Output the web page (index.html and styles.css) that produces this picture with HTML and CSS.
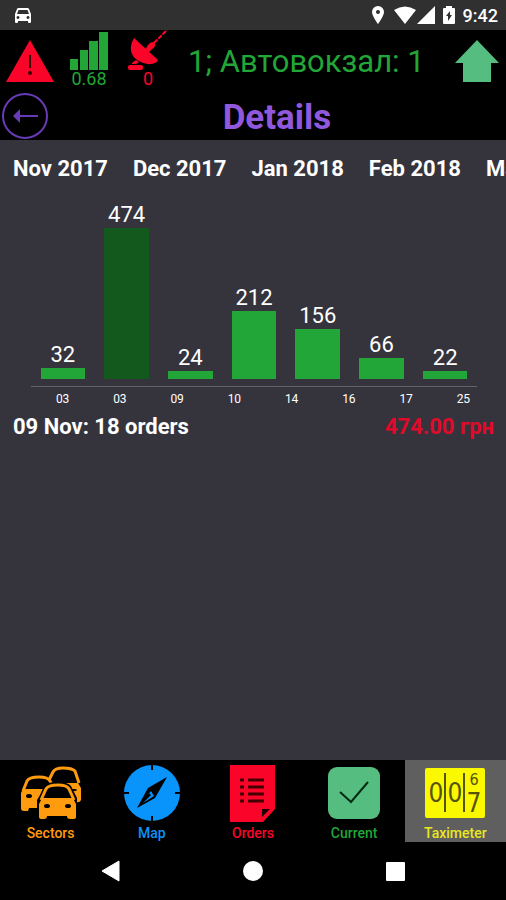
FILE: index.html
```html
<!DOCTYPE html>
<html lang="en">
    <head>
        <meta charset="utf-8">
        <meta name="viewport" content="width=device-width, initial-scale=1">
        <title>Details</title>
        <link rel="stylesheet" href="styles.css">
    </head>
    <body>
        <div class="status-bar">
            <svg width="18" height="18" viewBox="0 0 18 18" fill="#fff">
                <path fill-rule="evenodd" d="M3 3Q3.300 2 4.500 2h9Q14.700 2 15 3l2 5v8q0 1-1 1h-1q-1 0-1-1v-1H4v1q0 1-1 1H2q-1 0-1-1V8zM4.500 4 3 8h12L13.500 4zM4 10a1.500 1.500 0 1 0 .01 0zM14 10a1.500 1.500 0 1 0 .01 0z"/>
            </svg>
            <div class="status-right">
                <svg width="14" height="20" viewBox="0 0 14 20" fill="#fff">
                    <path fill-rule="evenodd" d="M7 1a6 6 0 0 1 6 6c0 4-6 12-6 12S1 11 1 7a6 6 0 0 1 6-6zm0 4a2 2 0 1 0 .01 0z"/>
                </svg>
                <svg class="wifi" width="24" height="20" viewBox="0 0 24 20" fill="#fff"><path d="M1 5Q12-2 23 5L12 19z"/></svg>
                <svg width="18" height="20" viewBox="0 0 18 20" fill="#fff"><path d="M18 1v18H0z"/></svg>
                <svg class="battery" width="12" height="20" viewBox="0 0 12 20">
                    <path fill="#fff" d="M3 3V1h6v2h2q1 0 1 1v14q0 1-1 1H1q-1 0-1-1V4q0-1 1-1z"/>
                    <path fill="#303030" d="M7 6 3 11h2v5l4-6H7z"/>
                </svg>
                <span class="time">9:42</span>
            </div>
        </div>

        <header class="top-bar">
            <svg class="alert" width="48" height="42" viewBox="0 0 48 42">
                <path fill="#fb0429" d="M24 0 48 42H0z"/>
                <path stroke="#300" stroke-width="2" d="M24 15v13"/>
                <circle cx="24" cy="33" r="2" fill="#300"/>
            </svg>
            <div class="indicator signal">
                <svg width="38" height="38" viewBox="0 0 38 38" fill="#22a637">
                    <path d="M0 27h8v11H0zM10 18h8v20h-8zM19 9h9v29h-9zM29 0h9v38h-9z"/>
                </svg>
                <span>0.68</span>
            </div>
            <div class="indicator gps">
                <svg width="40" height="40" viewBox="0 0 40 40" fill="#fb0429">
                    <path d="M6 8C0 18 3 27 11 31Q20 37 29 32L30 30z"/>
                    <path d="M17 20l3-5q4-5 7-2 1 4-3 6l-4 4z"/>
                    <rect y="35" width="15" height="5" rx="2"/>
                    <path d="M4 33l4-3 3 2-3 2H4z"/>
                    <path stroke="#fb0429" stroke-width="2" stroke-dasharray="5 1" d="M26 13 39 0"/>
                </svg>
                <span>0</span>
            </div>
            <div class="sector">1; Автовокзал: 1</div>
            <svg width="44" height="42" viewBox="0 0 44 42" fill="#55bd80"><path d="M22 0 44 23H36V42H8V23H0z"/></svg>
        </header>

        <div class="title-bar">
            <button class="back" type="button" aria-label="Back">
                <svg width="48" height="48" viewBox="0 0 48 48">
                    <circle cx="24" cy="24" r="22" fill="none" stroke="#673ab7" stroke-width="2"/>
                    <path d="M37 24H18" stroke="#673ab7" stroke-width="2"/>
                    <path fill="#673ab7" d="M12 24 19 17v14z"/>
                </svg>
            </button>
            <h1>Details</h1>
        </div>

        <main>
            <nav class="months">
                <a href="#nov">Nov 2017</a>
                <a href="#dec">Dec 2017</a>
                <a href="#jan">Jan 2018</a>
                <a href="#feb">Feb 2018</a>
                <a href="#mar">Mar 2018</a>
            </nav>

            <div class="chart">
                <div class="bars">
                    <div class="col"><span>32</span><div class="bar" style="height:7%"></div></div>
                    <div class="col"><span>474</span><div class="bar selected" style="height:100%"></div></div>
                    <div class="col"><span>24</span><div class="bar" style="height:5%"></div></div>
                    <div class="col"><span>212</span><div class="bar" style="height:45%"></div></div>
                    <div class="col"><span>156</span><div class="bar" style="height:33%"></div></div>
                    <div class="col"><span>66</span><div class="bar" style="height:14%"></div></div>
                    <div class="col"><span>22</span><div class="bar" style="height:5%"></div></div>
                </div>
                <div class="ticks">
                    <span>03</span>
                    <span>03</span>
                    <span>09</span>
                    <span>10</span>
                    <span>14</span>
                    <span>16</span>
                    <span>17</span>
                    <span>25</span>
                </div>
            </div>

            <div class="summary">
                <span>09 Nov: 18 orders</span>
                <span class="total">474.00 грн</span>
            </div>
        </main>

        <nav class="tabs">
            <a class="sectors" href="#sectors">
                <svg width="62" height="58" viewBox="0 0 62 58">
                    <path fill="none" stroke="#ff9b0f" stroke-width="3" d="M29 16 33 8Q35 4 43 4q9 0 12 3l4 12"/>
                    <path fill="#ff9b0f" d="M35 19h23l3 5v12q-1 3-5 2l-5-1-4-12-4-3-8-1z"/>
                    <ellipse cx="54" cy="26" rx="3" ry="1"/>
                    <path fill="none" stroke="#ff9b0f" stroke-width="3" d="M3 27 7 17q2-4 12-4 9 0 11 4l2 3"/>
                    <path fill="#ff9b0f" d="M3 25h22l-3 5-2 14H9l-1 3H4q-3 0-3-3V29z"/>
                    <ellipse cx="9" cy="32" rx="3" ry="2"/>
                    <path d="M17 46V36l3-5 4-9q3-4 13-4 11 0 14 4l6 12v10z"/>
                    <path fill="none" stroke="#ff9b0f" stroke-width="3" d="M21 36 26 25q2-4 12-4 9 0 11 4l5 11"/>
                    <path fill="#ff9b0f" d="M22 34h31l3 6v13q0 2-3 2h-3q-3 0-3-3H27q0 3-3 3h-3q-2 0-2-2V40z"/>
                    <ellipse cx="27" cy="42" rx="3" ry="2"/>
                    <ellipse cx="48" cy="42" rx="3" ry="2"/>
                </svg>
                <span>Sectors</span>
            </a>
            <a class="map" href="#map">
                <svg width="58" height="58" viewBox="0 0 58 58">
                    <circle cx="29" cy="29" r="28" fill="#0894fb"/>
                    <path stroke="#000" stroke-width="2" d="M29 0v6M29 52v6M0 29h6M52 29h6"/>
                    <path d="M44 13 32 34 14 44 25 24z"/>
                    <path fill="#0894fb" d="M28 27l3 5-11 7 4-4 4-4-2-2-5 6z"/>
                </svg>
                <span>Map</span>
            </a>
            <a class="orders" href="#orders">
                <svg width="45" height="58" viewBox="0 0 45 58">
                    <path fill="#fb0429" d="M0 1h45v44L33 58H0z"/>
                    <path stroke="#400" stroke-width="3" d="M18 16h16M18 23h16M18 30h16M18 37h16M10 16h4M10 23h4M10 30h4M10 37h4"/>
                    <path fill="#200" d="M32 45h8l-8 8z"/>
                </svg>
                <span>Orders</span>
            </a>
            <a class="current" href="#current">
                <svg width="52" height="58" viewBox="0 0 52 58">
                    <rect y="3" width="52" height="52" rx="9" fill="#55bd80"/>
                    <path fill="none" stroke="#042a12" stroke-width="2" d="M12 28 23 38 40 18"/>
                </svg>
                <span>Current</span>
            </a>
            <a class="taximeter" href="#taximeter">
                <svg class="meter" width="60" height="58" viewBox="0 0 60 58">
                    <rect y="4" width="60" height="50" rx="2" fill="#fbf900"/>
                    <path stroke="#55540b" stroke-width="2" d="M20 9v39M39 9v39"/>
                    <g fill="#55540b" text-anchor="middle">
                        <text x="11" y="38">0</text>
                        <text x="30" y="38">0</text>
                        <text class="rolling" x="49" y="21">6</text>
                        <text x="49" y="48">7</text>
                    </g>
                </svg>
                <span>Taximeter</span>
            </a>
        </nav>

        <div class="system-nav">
            <button type="button" aria-label="Back"><svg width="20" height="22" viewBox="0 0 20 22" fill="#fff"><path d="M18 1v20L1 11z" stroke="#fff" stroke-linejoin="round"/></svg></button>
            <button type="button" aria-label="Home"><svg width="22" height="22" viewBox="0 0 22 22" fill="#fff"><circle cx="11" cy="11" r="10"/></svg></button>
            <button type="button" aria-label="Recent"><svg width="22" height="22" viewBox="0 0 22 22" fill="#fff"><rect x="2" y="2" width="19" height="19" rx="1"/></svg></button>
        </div>
    </body>
</html>
```
FILE: styles.css
```css
*{
    box-sizing: border-box;
}

body{
    margin: 0;
    min-height: 100vh;
    display: flex;
    flex-direction: column;
    background-color: #000;
    color: #fff;
    font-family: Roboto, "Liberation Sans", sans-serif;
    overflow-x: hidden;
}

svg{
    display: block;
    flex: none;
}

a{
    color: inherit;
    text-decoration: none;
}

button{
    padding: 0;
    border: none;
    background: none;
    cursor: pointer;
}

/* status bar */
.status-bar{
    height: 30px;
    padding: 0 8px 0 14px;
    display: flex;
    align-items: center;
    justify-content: space-between;
    background-color: #303030;
}

.status-right{
    display: flex;
    align-items: center;
}

.wifi{
    margin-left: 8px;
}

.battery{
    margin: 0 8px;
}

.time{
    font-size: 18px;
    font-weight: 500;
}

/* header */
.top-bar{
    height: 62px;
    padding: 0 7px 0 6px;
    display: flex;
    align-items: center;
}

.indicator{
    align-self: stretch;
    display: flex;
    flex-direction: column;
    align-items: center;
    font-size: 18px;
    line-height: 18px;
}

.signal{
    width: 38px;
    margin-left: 16px;
    padding-top: 2px;
    color: #22a637;
}

.gps{
    margin-left: 20px;
    color: #fb0429;
}

.sector{
    flex: 1;
    padding-left: 20px;
    color: #22a637;
    font-size: 31px;
    white-space: nowrap;
}

.title-bar{
    height: 48px;
    padding: 0 1px;
    display: grid;
    grid-template-columns: 48px 1fr;
    align-items: center;
}

.title-bar h1{
    margin: 0;
    padding-top: 2px;
    color: #9058dc;
    font-size: 35px;
    font-weight: 700;
    text-align: center;
}

/* content */
main{
    flex: 1;
    background-color: #35343d;
}

.months{
    padding: 16px 0 0 13px;
    display: flex;
    gap: 25px;
    overflow: hidden;
    font-size: 22px;
    font-weight: 700;
    line-height: 26px;
    white-space: nowrap;
}

.bars{
    height: 205px;
    margin: 0 29px 0 31px;
    padding: 46px 0 7px;
    display: flex;
    border-bottom: 1px solid #62616a;
}

.col{
    flex: 1;
    display: flex;
    flex-direction: column;
    justify-content: flex-end;
    align-items: center;
    font-size: 22px;
    line-height: 26px;
}

.bar{
    width: 70%;
    flex: none;
    background-color: #22a637;
}

.selected{
    background-color: #13591d;
}

.ticks{
    margin: 0 14px 0 34px;
    padding-top: 4px;
    display: flex;
    font-size: 12px;
    line-height: 16px;
}

.ticks span{
    flex: 1;
    text-align: center;
}

.summary{
    padding: 7px 12px 0 13px;
    display: flex;
    justify-content: space-between;
    font-size: 22px;
    font-weight: 700;
    line-height: 26px;
}

.total{
    color: #e00a2b;
}

/* bottom tabs */
.tabs{
    height: 82px;
    display: grid;
    grid-template-columns: repeat(5, 1fr);
}

.tabs a{
    padding-top: 4px;
    display: flex;
    flex-direction: column;
    align-items: center;
    gap: 2px;
    font-size: 14px;
    font-weight: 500;
    line-height: 18px;
}

.sectors{
    color: #ff9b0f;
}

.map{
    color: #0894fb;
}

.orders{
    color: #fb0429;
}

.current{
    color: #22a637;
}

.taximeter{
    background-color: #5f5f5f;
    color: #e9e71e;
}

.meter{
    font-family: "Liberation Sans Narrow", "DejaVu Sans Condensed", sans-serif;
    font-size: 26px;
    font-weight: 400;
}

.rolling{
    font-size: 16px;
}

.system-nav{
    height: 58px;
    padding: 0 40px;
    display: grid;
    grid-template-columns: repeat(3, 1fr);
    align-items: center;
    justify-items: center;
}
```
